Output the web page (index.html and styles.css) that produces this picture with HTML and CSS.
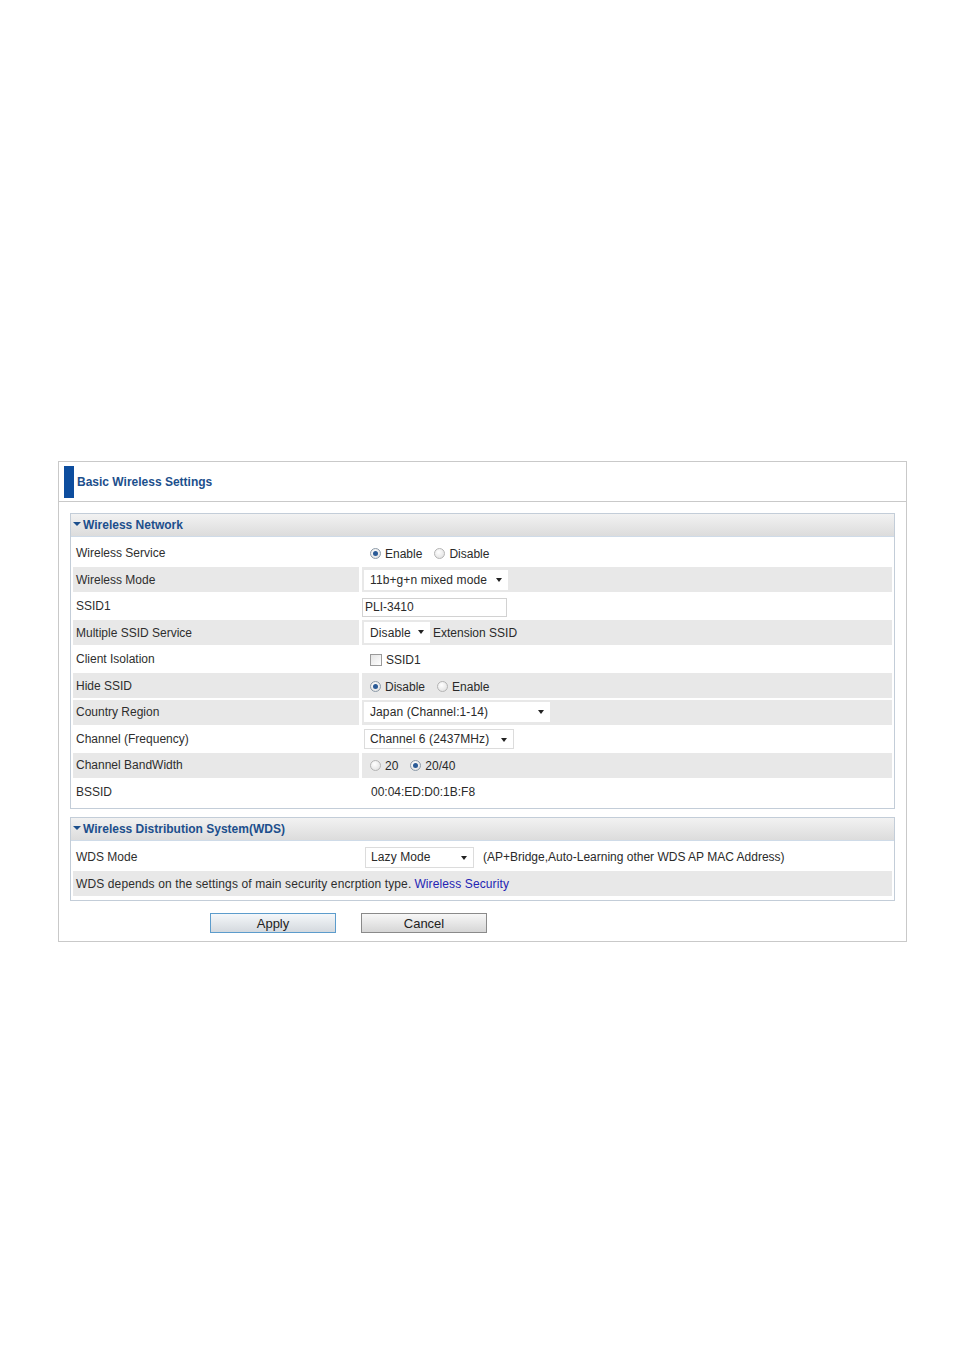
FILE: index.html
```html
<!DOCTYPE html>
<html>
<head>
<meta charset="utf-8">
<link rel="stylesheet" href="styles.css">
</head>
<body>
<div class="page">
  <div class="panel">
    <div class="title-bar">
      <span class="title-mark"></span>
      <span class="title-text">Basic Wireless Settings</span>
    </div>
    <div class="panel-body">
      <div class="section">
        <div class="sec-head"><span class="tri"></span>Wireless Network</div>
        <div class="rows">
          <div class="row">
            <div class="lbl">Wireless Service</div>
            <div class="val pad8"><span class="radio on"></span><span class="rtxt">Enable</span><span class="radio"></span><span class="rtxt">Disable</span></div>
          </div>
          <div class="row gray">
            <div class="lbl">Wireless Mode</div>
            <div class="val pad2"><div class="sel w144">11b+g+n mixed mode<span class="arr"></span></div></div>
          </div>
          <div class="row">
            <div class="lbl">SSID1</div>
            <div class="val"><div class="txtin">PLI-3410</div></div>
          </div>
          <div class="row gray">
            <div class="lbl">Multiple SSID Service</div>
            <div class="val pad2"><div class="sel w66">Disable<span class="arr"></span></div><span class="after">Extension SSID</span></div>
          </div>
          <div class="row">
            <div class="lbl">Client Isolation</div>
            <div class="val pad8"><span class="check"></span><span class="rtxt">SSID1</span></div>
          </div>
          <div class="row gray">
            <div class="lbl">Hide SSID</div>
            <div class="val pad8"><span class="radio on"></span><span class="rtxt">Disable</span><span class="radio"></span><span class="rtxt">Enable</span></div>
          </div>
          <div class="row gray">
            <div class="lbl">Country Region</div>
            <div class="val pad2"><div class="sel w186">Japan (Channel:1-14)<span class="arr"></span></div></div>
          </div>
          <div class="row">
            <div class="lbl">Channel (Frequency)</div>
            <div class="val pad2"><div class="sel w150 bord">Channel 6 (2437MHz)<span class="arr"></span></div></div>
          </div>
          <div class="row gray">
            <div class="lbl">Channel BandWidth</div>
            <div class="val pad8"><span class="radio"></span><span class="rtxt">20</span><span class="radio on"></span><span class="rtxt">20/40</span></div>
          </div>
          <div class="row">
            <div class="lbl">BSSID</div>
            <div class="val pad9">00:04:ED:D0:1B:F8</div>
          </div>
        </div>
      </div>

      <div class="section sec2">
        <div class="sec-head"><span class="tri"></span>Wireless Distribution System(WDS)</div>
        <div class="rows">
          <div class="row">
            <div class="lbl">WDS Mode</div>
            <div class="val pad3"><div class="sel w109 bord">Lazy Mode<span class="arr"></span></div><span class="after2">(AP+Bridge,Auto-Learning other WDS AP MAC Address)</span></div>
          </div>
          <div class="row gray full">
            <div class="lbl note">WDS depends on the settings of main security encrption type. <a class="link">Wireless Security</a></div>
          </div>
        </div>
      </div>

      <div class="buttons">
        <div class="btn apply">Apply</div>
        <div class="btn">Cancel</div>
      </div>
    </div>
  </div>
</div>
</body>
</html>
```

FILE: styles.css
```css
html, body {
  margin: 0;
  padding: 0;
  background: #ffffff;
}
body {
  font-family: "Liberation Sans", Arial, sans-serif;
  font-size: 12px;
  color: #2a2a2a;
}
.page {
  padding-top: 461px;
  padding-left: 58px;
}
.panel {
  width: 847px;
  height: 479px;
  border: 1px solid #c9c9c9;
}
.title-bar {
  height: 39px;
  border-bottom: 1px solid #c9c9c9;
  display: flex;
  align-items: center;
  padding-left: 5px;
}
.title-mark {
  width: 10px;
  height: 32px;
  background: #0d4d9e;
  margin-right: 3px;
}
.title-text {
  font-weight: bold;
  color: #1c4f8c;
  font-size: 12px;
  padding-top: 1px;
}
.panel-body {
  padding: 11px 11px 0 11px;
}
.section {
  border: 1px solid #c3cdd8;
  padding: 0 2px 4px 1px;
}
.sec2 {
  margin-top: 8px;
  padding-bottom: 4px;
}
.sec-head {
  height: 22px;
  margin: 0 -2px 0 -1px;
  background: linear-gradient(#f2f2f2, #dcdcdc);
  border-bottom: 1px solid #cfdbe8;
  display: flex;
  align-items: center;
  padding-left: 2px;
  font-weight: bold;
  color: #1c4f8c;
  font-size: 12px;
}
.tri {
  width: 0;
  height: 0;
  border-left: 4px solid transparent;
  border-right: 4px solid transparent;
  border-top: 4px solid #1c4f8c;
  margin-right: 2px;
  margin-top: -2px;
}
.rows {
  display: flex;
  flex-direction: column;
  gap: 1.5px;
  padding-top: 3.5px;
  padding-left: 1px;
}
.row {
  display: grid;
  grid-template-columns: 286px 1fr;
  column-gap: 3px;
  height: 25px;
}
.row.full {
  grid-template-columns: 1fr;
}
.lbl, .val {
  display: flex;
  align-items: center;
  white-space: nowrap;
}
.lbl {
  padding-left: 3px;
  color: #2e2e2e;
}
.lbl.note {
  letter-spacing: 0.12px;
}
.row.gray .lbl, .row.gray .val {
  background: #e8e8e8;
}
.pad2 { padding-left: 2px; }
.pad3 { padding-left: 3px; }
.pad8 { padding-left: 8px; }
.pad9 { padding-left: 9px; }
.radio {
  width: 9px;
  height: 9px;
  border-radius: 50%;
  border: 1px solid #b4b4b4;
  background: radial-gradient(circle at 40% 35%, #ffffff, #dcdcdc);
  box-sizing: content-box;
  position: relative;
  margin-top: 1px;
}
.radio.on {
  border-color: #8c9aa8;
}
.radio.on::after {
  content: "";
  position: absolute;
  left: 2px;
  top: 2px;
  width: 5px;
  height: 5px;
  border-radius: 50%;
  background: #2a5a96;
}
.rtxt {
  margin-left: 4px;
  margin-right: 12px;
  padding-top: 2px;
}
.check {
  width: 10px;
  height: 10px;
  border: 1px solid #9a9a9a;
  background: linear-gradient(135deg, #e4e4e4, #ffffff);
  margin-top: 1px;
}
.sel {
  position: relative;
  height: 20px;
  background: #ffffff;
  display: flex;
  align-items: center;
  padding-left: 6px;
  box-sizing: border-box;
  letter-spacing: 0.1px;
}
.sel.bord {
  border: 1px solid #dcdcdc;
  padding-left: 5px;
}
.arr {
  position: absolute;
  right: 6px;
  top: 8px;
  width: 0;
  height: 0;
  border-left: 3.5px solid transparent;
  border-right: 3.5px solid transparent;
  border-top: 4px solid #222;
}
.w144 { width: 144px; }
.w66 { width: 66px; height: 21px; }
.w186 { width: 186px; }
.w150 { width: 150px; }
.w109 { width: 109px; height: 21px; }
.after {
  margin-left: 3px;
}
.after2 {
  margin-left: 9px;
}
.txtin {
  width: 145px;
  height: 19px;
  border: 1px solid #d2d2d2;
  box-sizing: border-box;
  background: #fff;
  display: flex;
  align-items: center;
  padding-left: 2px;
  margin-top: 2px;
}
.link {
  color: #2424b4;
  margin-left: 3px;
}
.buttons {
  display: flex;
  gap: 25px;
  padding-left: 140px;
  margin-top: 12px;
}
.btn {
  width: 126px;
  height: 20px;
  box-sizing: border-box;
  border: 1px solid #8a8a8a;
  background: linear-gradient(#f7f7f7, #d6d6d6);
  display: flex;
  align-items: center;
  justify-content: center;
  font-size: 13px;
  color: #222;
}
.btn.apply {
  border-color: #5c9ccc;
  background: linear-gradient(#f4f7fa, #d4d9de);
}
```
